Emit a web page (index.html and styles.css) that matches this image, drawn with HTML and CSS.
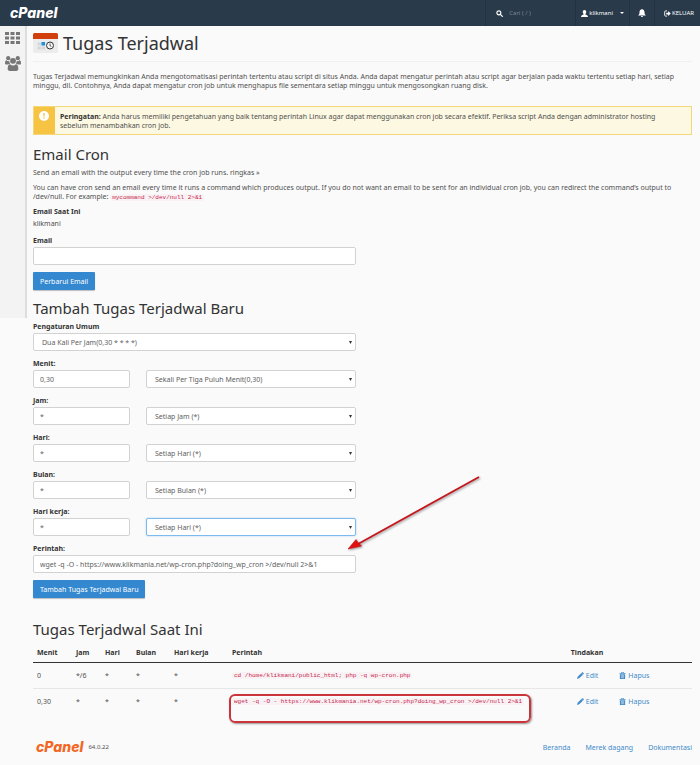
FILE: index.html
```html
<!DOCTYPE html>
<html lang="id">
<head>
    <meta charset="UTF-8">
    <meta name="viewport" content="width=device-width, initial-scale=1.0">
    <title>cPanel - Tugas Terjadwal</title>
    <link rel="stylesheet" href="styles.css">
</head>
<body>
    <!-- Top bar -->
    <header class="topbar">
        <a class="logo" href="#">cPanel</a>
        <div class="topbar-right">
            <div class="topbar-item search">
                <svg class="icon" viewBox="0 0 16 16"><circle cx="6.5" cy="6.5" r="4.5" fill="none" stroke="currentColor" stroke-width="2.6"/><path d="M10 10l4.5 4.5" stroke="currentColor" stroke-width="3" stroke-linecap="round"/></svg>
                <input type="text" placeholder="Cari ( / )" aria-label="Cari">
            </div>
            <button class="topbar-item user" type="button">
                <svg class="icon" viewBox="0 0 16 16"><path d="M8 0c2.500 0 4 1.800 4 4.300 0 2-.8 3.700-2 4.600v1.400c2.500 1 6 1.500 6 5.700H0c0-4.200 3.500-4.700 6-5.700V8.900C4.800 8 4 6.300 4 4.300 4 1.800 5.500 0 8 0z" fill="currentColor"/></svg>
                <span>klikmani</span>
                <span class="caret"></span>
            </button>
            <button class="topbar-item bell" type="button" aria-label="Notifikasi">
                <svg viewBox="0 0 16 16"><path d="M8 0c.8 0 1.300.5 1.300 1.200C11.800 1.800 13 3.800 13 6.500c0 3.500 1 5 3 6.500H0c2-1.500 3-3 3-6.500 0-2.700 1.200-4.700 3.700-5.300C6.700.5 7.200 0 8 0zM6 14h4c0 1.200-.9 2-2 2s-2-.8-2-2z" fill="currentColor"/></svg>
            </button>
            <a class="topbar-item logout" href="#">
                <svg class="icon" viewBox="0 0 16 16"><path d="M7 2H4a2.500 2.500 0 0 0-2.500 2.500v7A2.500 2.500 0 0 0 4 14h3" fill="none" stroke="currentColor" stroke-width="2"/><path d="M9.500 2.500L15.500 8l-6 5.500V10H5V6h4.500z" fill="currentColor"/></svg>
                <span>KELUAR</span>
            </a>
        </div>
    </header>

    <div class="layout">
        <!-- Sidebar -->
        <nav class="sidebar">
            <a href="#" aria-label="Beranda">
                <svg viewBox="0 0 15 12"><path d="M0 0h4v3H0zM5.500 0h4v3h-4zM11 0h4v3h-4zM0 4.500h4v3H0zM5.500 4.500h4v3h-4zM11 4.500h4v3h-4zM0 9h4v3H0zM5.500 9h4v3h-4zM11 9h4v3h-4z" fill="#777"/></svg>
            </a>
            <a href="#" aria-label="Pengguna">
                <svg viewBox="0 0 30 28" class="users"><g fill="#777"><circle cx="6" cy="4" r="4"/><circle cx="24" cy="4" r="4"/><circle cx="15" cy="9" r="5.500"/><path d="M0 14c0-4 1-6 3-6 2 2 4 2 5 1 0 2 .5 4 2 5.500-2 0-3.500.5-4.500 1.500H2c-1.300 0-2-.7-2-2zM30 14c0-4-1-6-3-6-2 2-4 2-5 1 0 2-.5 4-2 5.500 2 0 3.500.5 4.500 1.500H28c1.300 0 2-.7 2-2zM5 24c0-5 1.500-8.500 4.500-8.500 3.500 3 7.500 3 11 0 3 0 4.500 3.500 4.500 8.500 0 2.500-1.500 4-4 4H9c-2.500 0-4-1.500-4-4z"/></g></svg>
            </a>
        </nav>

        <!-- Main content -->
        <main class="content">
            <div class="page-header">
                <svg class="page-icon" viewBox="0 0 25 20"><rect width="25" height="20" rx="1.500" fill="#ececec"/><path d="M1.500 0h22A1.500 1.500 0 0 1 25 1.500V6H0V1.500A1.500 1.500 0 0 1 1.500 0z" fill="#d1400c"/><path d="M4.500 9.500H8v3H4.500zM4.500 13.500H8v3H4.500zM8.500 13.500H12v3H8.500z" fill="#d3d7da"/><path d="M8.500 9H12v3.500H8.500z" fill="#1b8fe0"/><circle cx="17" cy="12.500" r="3.500" fill="#f5f5f5" stroke="#333" stroke-width="1"/><path d="M17 10.500v2.200l1.400.7" fill="none" stroke="#333" stroke-width=".8"/></svg>
                <h1>Tugas Terjadwal</h1>
            </div>

            <p class="intro">Tugas Terjadwal memungkinkan Anda mengotomatisasi perintah tertentu atau script di situs Anda. Anda dapat mengatur perintah atau script agar berjalan pada waktu tertentu setiap hari, setiap minggu, dll. Contohnya, Anda dapat mengatur cron job untuk menghapus file sementara setiap minggu untuk mengosongkan ruang disk.</p>

            <div class="alert">
                <div class="alert-icon">
                    <svg viewBox="0 0 20 20"><circle cx="10" cy="10" r="10" fill="#fff"/><path d="M8.500 4h3l-.5 7.500H9zM8.800 13h2.400v2.500H8.800z" fill="#f6c342"/></svg>
                </div>
                <p><strong>Peringatan:</strong> Anda harus memiliki pengetahuan yang baik tentang perintah Linux agar dapat menggunakan cron job secara efektif. Periksa script Anda dengan administrator hosting sebelum menambahkan cron job.</p>
            </div>

            <section class="email-cron">
                <h2>Email Cron</h2>
                <p>Send an email with the output every time the cron job runs. ringkas »</p>
                <p>You can have cron send an email every time it runs a command which produces output. If you do not want an email to be sent for an individual cron job, you can redirect the command’s output to /dev/null. For example: <code>mycommand &gt;/dev/null 2&gt;&amp;1</code></p>
                <div class="current">
                    <strong>Email Saat Ini</strong>
                    <span>klikmani</span>
                </div>
                <form class="form">
                    <div class="group">
                        <label for="email">Email</label>
                        <input type="text" id="email">
                    </div>
                    <button class="btn" type="button">Perbarui Email</button>
                </form>
            </section>

            <section class="add-cron">
                <h2>Tambah Tugas Terjadwal Baru</h2>
                <form class="form">
                    <div class="group">
                        <label for="common">Pengaturan Umum</label>
                        <select id="common"><option>Dua Kali Per Jam(0,30 * * * *)</option></select>
                    </div>
                    <div class="group">
                        <label for="minute">Menit:</label>
                        <div class="pair">
                            <input type="text" id="minute" value="0,30">
                            <select aria-label="Menit"><option>Sekali Per Tiga Puluh Menit(0,30)</option></select>
                        </div>
                    </div>
                    <div class="group">
                        <label for="hour">Jam:</label>
                        <div class="pair">
                            <input type="text" id="hour" value="*">
                            <select aria-label="Jam"><option>Setiap Jam (*)</option></select>
                        </div>
                    </div>
                    <div class="group">
                        <label for="day">Hari:</label>
                        <div class="pair">
                            <input type="text" id="day" value="*">
                            <select aria-label="Hari"><option>Setiap Hari (*)</option></select>
                        </div>
                    </div>
                    <div class="group">
                        <label for="month">Bulan:</label>
                        <div class="pair">
                            <input type="text" id="month" value="*">
                            <select aria-label="Bulan"><option>Setiap Bulan (*)</option></select>
                        </div>
                    </div>
                    <div class="group">
                        <label for="weekday">Hari kerja:</label>
                        <div class="pair">
                            <input type="text" id="weekday" value="*">
                            <select class="active" aria-label="Hari kerja"><option>Setiap Hari (*)</option></select>
                        </div>
                    </div>
                    <div class="group command">
                        <label for="command">Perintah:</label>
                        <input type="text" id="command" value="wget -q -O - https://www.klikmania.net/wp-cron.php?doing_wp_cron &gt;/dev/null 2&gt;&amp;1">
                        <svg class="arrow" viewBox="0 0 134 76"><path d="M132 2L11 69" stroke="#c4161c" stroke-width="1.800"/><path d="M1 74l8-9.500 2 3 3.500 3.500z" fill="#e01010" stroke="#c4161c" stroke-width=".6"/></svg>
                    </div>
                    <button class="btn" type="button">Tambah Tugas Terjadwal Baru</button>
                </form>
            </section>

            <section class="current-cron">
                <h2>Tugas Terjadwal Saat Ini</h2>
                <table>
                    <colgroup>
                        <col class="col-minute"><col class="col-hour"><col class="col-day"><col class="col-month"><col class="col-weekday"><col><col class="col-actions">
                    </colgroup>
                    <thead>
                        <tr><th>Menit</th><th>Jam</th><th>Hari</th><th>Bulan</th><th>Hari kerja</th><th>Perintah</th><th>Tindakan</th></tr>
                    </thead>
                    <tbody>
                        <tr>
                            <td>0</td><td>*/6</td><td>*</td><td>*</td><td>*</td>
                            <td><code>cd /home/klikmani/public_html; php -q wp-cron.php</code></td>
                            <td>
                                <div class="actions">
                                    <a href="#"><svg viewBox="0 0 16 16"><path d="M0 16l1.500-5L10 2.500 13.500 6 5 14.500zM10.500 2l2-2L16 3.500l-2 2z" fill="currentColor"/></svg>Edit</a>
                                    <a href="#"><svg viewBox="0 0 16 16"><path d="M1 2h4V0h6v2h4v2H1zM6.500 1.200V2h3v-.8zM2 5h12v11H2zM4.500 6.500v8h1v-8zm3 0v8h1v-8zm3 0v8h1v-8z" fill="currentColor" fill-rule="evenodd"/></svg>Hapus</a>
                                </div>
                            </td>
                        </tr>
                        <tr>
                            <td>0,30</td><td>*</td><td>*</td><td>*</td><td>*</td>
                            <td><div class="marked"><code>wget -q -O - https://www.klikmania.net/wp-cron.php?doing_wp_cron &gt;/dev/null 2&gt;&amp;1</code></div></td>
                            <td>
                                <div class="actions">
                                    <a href="#"><svg viewBox="0 0 16 16"><path d="M0 16l1.500-5L10 2.500 13.500 6 5 14.500zM10.500 2l2-2L16 3.500l-2 2z" fill="currentColor"/></svg>Edit</a>
                                    <a href="#"><svg viewBox="0 0 16 16"><path d="M1 2h4V0h6v2h4v2H1zM6.500 1.200V2h3v-.8zM2 5h12v11H2zM4.500 6.500v8h1v-8zm3 0v8h1v-8zm3 0v8h1v-8z" fill="currentColor" fill-rule="evenodd"/></svg>Hapus</a>
                                </div>
                            </td>
                        </tr>
                    </tbody>
                </table>
            </section>

            <footer class="footer">
                <a class="logo logo-orange" href="#">cPanel</a>
                <span class="version">64.0.22</span>
                <nav class="footer-links">
                    <a href="#">Beranda</a>
                    <a href="#">Merek dagang</a>
                    <a href="#">Dokumentasi</a>
                </nav>
            </footer>
        </main>
    </div>
</body>
</html>
```

FILE: styles.css
```css
* {
    margin: 0;
    padding: 0;
    box-sizing: border-box;
}

body {
    font-family: "Noto Sans", "Open Sans", sans-serif;
    font-size: 7px;
    line-height: 9px;
    color: #505050;
    background-color: #fafafa;
}

a {
    color: #428bca;
    text-decoration: none;
}

input,
select,
button {
    font: inherit;
    color: inherit;
}

strong,
label,
th {
    font-weight: 700;
    color: #333;
}

h1,
h2 {
    font-weight: 400;
    color: #333;
}

h1 {
    font-size: 18px;
    line-height: 24px;
}

h2 {
    font-size: 15px;
    line-height: 20px;
}

code {
    font-family: "Liberation Mono", monospace;
    font-size: 6px;
    color: #c7254e;
    background-color: #f9f2f4;
    padding: 0 2px;
    border-radius: 2px;
}

/* Top bar */
.topbar {
    display: flex;
    justify-content: space-between;
    align-items: center;
    height: 26px;
    padding-left: 10px;
    background-color: #293a4a;
    color: #fff;
}

.logo {
    font-family: Inter, sans-serif;
    font-size: 14px;
    line-height: 16px;
    font-weight: 800;
    font-style: italic;
    color: #fff;
}

.topbar-right {
    display: flex;
    align-self: stretch;
    font-size: 6px;
}

.topbar-item {
    display: flex;
    align-items: center;
    gap: 1px;
    padding: 0 6px;
    border: none;
    border-left: 1px solid #233240;
    background: none;
    color: #fff;
}

.topbar-item .icon {
    width: 7px;
    height: 7px;
}

.topbar-item.search {
    width: 90px;
    padding-left: 10px;
    gap: 6px;
}

.search .icon {
    flex: none;
}

.search input {
    width: 100%;
    min-width: 0;
    border: none;
    background: none;
}

.search input::placeholder {
    color: #7d8893;
}

.topbar-item.user {
    padding: 0 5px;
}

.caret {
    margin-left: 6px;
    border: 2px solid transparent;
    border-top-color: #fff;
    border-bottom: none;
}

.topbar-item.bell {
    padding: 0 8px;
}

.bell svg {
    width: 8px;
    height: 8px;
}

.topbar-item.logout {
    padding-left: 9px;
}

/* Layout */
.layout {
    display: flex;
    align-items: flex-start;
}

.sidebar {
    display: flex;
    flex-direction: column;
    align-items: center;
    gap: 12px;
    width: 27px;
    min-height: 292px;
    padding-top: 6px;
    background-color: #f3f3f3;
    border-right: 2px solid #ddd;
}

.sidebar svg {
    display: block;
    width: 15px;
    height: 12px;
}

.sidebar .users {
    width: 16px;
    height: 15px;
}

.content {
    flex: 1;
    min-width: 0;
    padding: 0 8px 8px 6px;
}

.page-header {
    display: flex;
    align-items: center;
    gap: 5px;
    height: 36px;
    padding-bottom: 2px;
    border-bottom: 1px solid #f0f0f0;
}

.page-icon {
    width: 25px;
    height: 20px;
}

.intro {
    margin: 10px 0 16px;
}

/* Warning box */
.alert {
    display: flex;
    background-color: #fcf8e1;
    border: 1px solid #f3d77c;
}

.alert-icon {
    width: 21px;
    padding: 4px 5px;
    background-color: #f6c342;
}

.alert-icon svg {
    display: block;
    width: 10px;
    height: 10px;
}

.alert p {
    flex: 1;
    padding: 5px 20px 4px 5px;
}

/* Email section */
.email-cron h2 {
    margin: 9px 0 4px;
}

.email-cron p {
    margin-bottom: 6px;
}

.email-cron p + p {
    margin-bottom: 5px;
}

.current {
    display: flex;
    flex-direction: column;
    gap: 3px;
    margin-bottom: 7px;
}

/* Forms */
.form {
    width: 49%;
}

.group {
    display: flex;
    flex-direction: column;
    gap: 1px;
    margin-bottom: 7px;
}

.group label {
    line-height: 11px;
}

.pair {
    display: grid;
    grid-template-columns: 30% 65%;
    justify-content: space-between;
}

.group input,
.group select {
    width: 100%;
    height: 18px;
    padding: 0 6px;
    background-color: #fff;
    border: 1px solid #d2d2d2;
    border-radius: 2px;
    color: #606060;
}

.group select {
    appearance: none;
    padding: 0 8px;
    background-image: url("data:image/svg+xml,%3Csvg xmlns='http://www.w3.org/2000/svg' viewBox='0 0 4 4'%3E%3Cpath d='M0 0h4L2 4z' fill='%23333'/%3E%3C/svg%3E");
    background-repeat: no-repeat;
    background-position: right 3px center;
    background-size: 3px 3px;
}

.group select.active {
    border-color: #7dbbec;
    box-shadow: 0 0 2px #a5cff2;
}

.btn {
    display: block;
    height: 18px;
    padding: 0 7px;
    border: none;
    border-radius: 1px;
    background-color: #3488cf;
    box-shadow: 0 1px 1px rgba(0, 0, 0, 0.25);
    color: #fff;
}

.add-cron h2 {
    margin: 8px 0 3px;
}

.command {
    position: relative;
}

/* Red pointer drawn over the form */
.arrow {
    position: absolute;
    right: -125px;
    bottom: 22px;
    width: 134px;
    height: 76px;
    filter: drop-shadow(1px 1px 1px rgba(0, 0, 0, 0.4));
}

/* Current jobs table */
.current-cron h2 {
    margin: 21px 0 5px;
}

table {
    width: 100%;
    table-layout: fixed;
    border-collapse: collapse;
}

.col-minute {
    width: 39px;
}

.col-hour {
    width: 29px;
}

.col-day {
    width: 31px;
}

.col-month {
    width: 38px;
}

.col-weekday {
    width: 58px;
}

.col-actions {
    width: 19%;
}

th,
td {
    padding: 0 4px;
    text-align: left;
    white-space: nowrap;
}

th {
    height: 18px;
    border-bottom: 1px solid #333;
}

td {
    height: 26px;
    border-bottom: 1px solid #e6e6e6;
}

tbody tr:last-child td {
    border-bottom: none;
}

.marked {
    position: relative;
}

.marked::after {
    content: "";
    position: absolute;
    top: -2px;
    left: -3px;
    width: 306px;
    height: 25px;
    max-width: 90%;
    border: 2px solid #c9353b;
    border-radius: 6px;
    box-shadow: 1px 1px 2px rgba(0, 0, 0, 0.4);
}

.actions {
    display: flex;
    gap: 21px;
    padding-left: 6px;
}

.actions a {
    display: flex;
    align-items: center;
    gap: 2px;
}

.actions svg {
    width: 7px;
    height: 7px;
}

/* Footer */
.footer {
    display: flex;
    align-items: center;
    margin-top: 25px;
    padding-left: 3px;
}

.logo-orange {
    color: #f26724;
}

.version {
    margin-left: 5px;
    font-size: 6px;
}

.footer-links {
    display: flex;
    gap: 15px;
    margin-left: auto;
}
```
